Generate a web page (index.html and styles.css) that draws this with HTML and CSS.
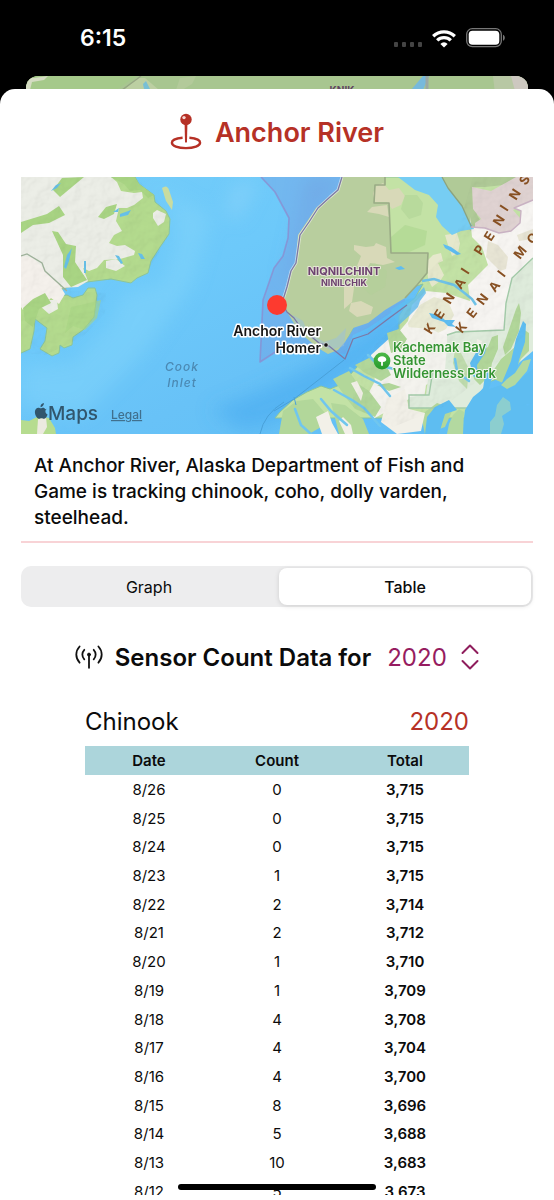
FILE: index.html
```html
<!DOCTYPE html>
<html lang="en">
<head>
  <meta charset="UTF-8" />
  <meta name="viewport" content="width=device-width, initial-scale=1" />
  <title>Anchor River</title>
  <link rel="stylesheet" href="styles.css">
</head>
<body>

  <div class="status-bar">
    <span class="clock">6:15</span>
    <div class="status-icons">
      <svg class="signal" width="28" height="6" viewBox="0 0 28 6" fill="#444">
        <rect x="0" y="1" width="4" height="5" rx="1" />
        <rect x="8" y="1" width="4" height="5" rx="1" />
        <rect x="16" y="1" width="4" height="5" rx="1" />
        <rect x="24" y="1" width="4" height="5" rx="1" />
      </svg>
      <svg width="24" height="19" viewBox="0 0 24 19" fill="none" stroke="#fff" stroke-width="3.3">
        <path d="M1.2 7.2a15.4 15.4 0 0 1 21.6 0" />
        <path d="M5.2 11.4a9.7 9.7 0 0 1 13.6 0" />
        <path d="M12 18.6l-3.6-3.7a5 5 0 0 1 7.2 0z" fill="#fff" stroke="none" />
      </svg>
      <svg width="40" height="20" viewBox="0 0 40 20">
        <rect x="0.7" y="0.7" width="34.6" height="18" rx="5.6" fill="none" stroke="#777" stroke-width="1.3" />
        <rect x="2.7" y="2.7" width="30.6" height="14" rx="3.8" fill="#fff" />
        <path d="M37 6.8c2.4 1 2.4 5 0 6z" fill="#777" />
      </svg>
    </div>
  </div>

  <div class="back-sheet">
    <svg width="100%" height="26" viewBox="0 0 502 26" preserveAspectRatio="none">
      <rect width="502" height="26" fill="#a8c690" />
      <path d="M0 0h110l-20 14H0z" fill="#a5c98a" />
      <path d="M0 6q2-5 8-4l14-2-4 4-12 2-2 8H0z" fill="#d5dcc3" />
      <path d="M98 14l13-12 8 0 14 12z" fill="#bccfa2" />
      <path d="M96 14l15-11 4-3" fill="none" stroke="#97a784" stroke-width="1.5" />
      <path d="M117 8l3-3 4 8h-6z" fill="#79bfd5" />
      <path d="M150 14l4-12 16-2-4 8-10 6z" fill="#b3ca9a" />
      <path d="M385 14l12-14h6l-6 14z" fill="#77b9dc" />
      <path d="M401 0v14" stroke="#9ba8a4" stroke-width="3" />
      <path d="M467 0h35v26h-32z" fill="#b8c8a4" />
      <path d="M485 0h17v26h-10z" fill="#cdc8c0" />
      <text x="316" y="18" class="back-label" text-anchor="middle">KNIK</text>
    </svg>
  </div>

  <main class="sheet">
    <header class="title">
      <svg width="32" height="38" viewBox="0 0 32 38">
        <path d="M12.6 24.7C6.3 25.1 1.9 27.2 1.9 29.8c0 3 6 5.3 14 5.3s14.200-2.300 14.200-5.300c0-2.600-4.400-4.700-10.700-5.100" fill="none" stroke="#b63126" stroke-width="2.400" />
        <path d="M14.600 11h2.800l-.4 17.500c-.1 1.600-1.900 1.600-2 0z" fill="#b63126" />
        <circle cx="16" cy="6.500" r="5.700" fill="#b63126" />
        <circle cx="14" cy="4.600" r="1.700" fill="#f6d6d2" />
      </svg>
      <h1>Anchor River</h1>
    </header>

    <svg class="map" viewBox="0 0 512 257" role="img" aria-label="Map of Anchor River">
      <defs>
        <linearGradient id="sea" x1="0" y1="0" x2="1" y2="1">
          <stop offset="0" stop-color="#74cdf9" />
          <stop offset="0.35" stop-color="#6dc9fa" />
          <stop offset="0.6" stop-color="#68c2f7" />
          <stop offset="1" stop-color="#5fbef5" />
        </linearGradient>
        <linearGradient id="park" x1="0" y1="0" x2="0" y2="1">
          <stop offset="0" stop-color="#4cb848" />
          <stop offset="1" stop-color="#259a2b" />
        </linearGradient>
        <filter id="soft" x="-20%" y="-20%" width="140%" height="140%">
          <feGaussianBlur stdDeviation="9" />
        </filter>
        <filter id="relief" x="0" y="0" width="100%" height="100%">
          <feTurbulence type="fractalNoise" baseFrequency="0.07" numOctaves="3" seed="4" result="noise" />
          <feDiffuseLighting in="noise" surfaceScale="2.200" lighting-color="#fff" result="light">
            <feDistantLight azimuth="225" elevation="68" />
          </feDiffuseLighting>
          <feComposite in="light" in2="SourceGraphic" operator="in" />
        </filter>
      </defs>

      <rect width="512" height="257" fill="url(#sea)" />

      <!-- shallow and deep water -->
      <g filter="url(#soft)">
        <path d="M117 0l35 25 4 40-14 40-40 12-14 30-36 38-52 4v40l60 10 60-60 50-70 20-70z" fill="#84d6fb" opacity="0.5" />
        <path d="M212 8l26-6-20 40-14-4z" fill="#8ad3fa" opacity="0.600" />
        <path d="M285 0h40l-30 36-20 60-12 10 14-60z" fill="#6caae6" opacity="0.500" />
        <path d="M290 190l50-30 30-24 24-12-24 42-30 24-40 28-50 30-30 5-30-20 50-20z" fill="#4aaaf0" opacity="0.600" />
      </g>
      <path d="M240 0l14 15 14 26-1 20-5 18-9 12-11 32-3 62 26-17 59 9 8-19 15-7 21-14 16-12V0z" fill="#7e8fd8" opacity="0.300" />

      <!-- west side of the inlet -->
      <path class="coast" fill="#b4db8e" d="M0 0h114l4 7 15 11 1 7 11 9 4 8-1 15-9 13-9 14-3 12-11 5-6 5-20-4-32 4-16 6-9 1-3 3 8 3 8-1 6 3 10-3 5-7h7l2 7-3 22-11 13-10 7-1 8-8 3-4-3-1 8-7 3-12-7 5-8 2-13-12-9-1 12-4 18-11 5-5-5z" />
      <path d="M141 11q5-4 7 2l4 12-1 8-6-9z" fill="#c9dca0" />
      <path d="M0 243l8 1 10-5 10 2 6 10 1 6H0z" fill="#b6dc8f" />
      <path d="M17 242l8-2 1 10-4 7h-6z" fill="#eceadf" />
      <g fill="#eceee7">
        <path d="M14 0h76l6 5 4 9 13 2 8-1 1 6-9 7-7 3-8 0-3 13 6 10-8 4-5 8 8 3 8-1 10 6-1 4-14 4-16 1-7 8-8 3-6-3 5 13-10 6-17 1-2-11-7-7-3 16-9-7 1-13-12-12-7-11-7 1 0-4-14 0L0 52V0z" />
        <path d="M0 59l20-12 10 3-1 15 5 10-6 7 9 10 10-6 3 14-7 8-10-2-8-12-12-8-13-2z" />
        <path d="M0 79l12 2 14 14 12 12 6 10-6 10-8-6-8 8-12-4-8 8-4-6z" fill="#f5f1ec" />
        <path d="M132 36l4-3 9 4-2 8-6 4-5-8z" />
        <path d="M85 84l10-2 9 7-9 5-10-3z" />
        <path d="M20 123h16l1 9-9 5-9-8z" />
      </g>
      <path d="M0 79l6-2 15 9 3 8 22 20" fill="none" stroke="#9fb39b" stroke-width="1.300" />
      <g fill="#a9d584">
        <path d="M32 13l9-12 22-1-12 10-12 10z" />
        <path d="M0 45l26-8 12-8 6 9-16 8-16 2L0 56z" />
        <path d="M31 54l6 1 8 12 10 2-1 16 12 18-16 7-8-10 0-22z" />
        <path d="M77 40l8-10 11-3-3 10-10 5z" />
        <path d="M90 0h24l4 7 15 11-6 3-8-8-10 1-6-7z" />
        <path d="M2 131l10-9 12-6 6 10-12 6-6 18-8-6z" />
        <path d="M50 130l14-3 16-4-4 18-12 12-12-4-8 7z" opacity="0.600" />
      </g>
      <g fill="#66c0e8">
        <path d="M85 37l11-4-3 5-8 2z" transform="translate(14 0)" />
        <path d="M92 35l6-4-1 4z" />
        <path d="M94 78l4 1 4 7-2 1z" />
        <path d="M117 76l4 1 3 5-4 0z" />
        <path d="M43 90l3-12 5-7-3 13-3 8z" />
        <path d="M63 84h2v12h-2z" />
        <path d="M30 14l5-6 5-2-4 5z" />
      </g>

      <!-- Kenai peninsula -->
      <path class="coast" fill="#c3e2a5" d="M321 0l-4 13-8 7-12 11-9 14-9 13-2 14-2 14-5 8-4 16-5 16 5 9 9 2 7 14 18 15 10 6 10-4 7-8 8-14 15-5 17-13 12-10 13-8 10-3-8 14-9 7-7 11 0 18-10 8-4 10-13 9-14 5-9 10-10 0 3 8-12 5-9-3-14 6-14 8-13 12-5 6h196l5-24 8-10 15-6 8-12 12-30 16-16 0-32 8 2 8-14V0z" />
      <path d="M321 0h43v8h-10l-1 18h15l2 50h37l-1 20-10 12-12 13-20 12-17 13-15 5-8 14-7 8-10 4-10-6-18-15-13-21-5-9 5-16 4-16 5-8 2-28 18-27 21-18z" fill="#b8ce9e" />
      <path d="M272 138l10 6 4 10 17 11 12-4 10-10-2 18-14 4-22-14-14-14z" fill="#99bfdb" opacity="0.500" />

      <g fill="#d8d9b8">
        <path d="M354 10l8-4 6 7 10-2 6 8-4 9-9 4-5-7-12 0-2-8z" />
        <path d="M351 30l15-2 2 12-10-3-12-2z" />
        <path d="M333 68l12 2 8-1 2-3 10 4 1 11 8 4-12 3-13-2-3 7-10-4 4-10-7-6z" />
        <path d="M323 110l6-5 4 6-2 14-8 7z" />
        <path d="M330 126l10-2 12 6-2 7-14 3-8-6z" />
      </g>
      <g fill="#aed194">
        <path d="M384 18l12 0 6 8-2 12-12 4-8-10z" opacity="0.500" />
        <path d="M370 60l14-12 22 6-2 14-18 8h-16z" fill="#a8d48a" opacity="0.500" />
        <path d="M421 0h75l-14 8-18 2-12 0 2 14 2 14 6 10-12 6-10-8-14-28z" fill="#b0ca97" />
        <path d="M340 92l14-6 12 8-2 16-14 8-12-10z" opacity="0.350" />
      </g>

      <!-- mountains and ice on the right side -->
      <path d="M451 10l19 4 18-10 7-4h17v23l-12 6-8 4 7 8 1 6-8 6-12 4-12-3-14-2 0-6 6-4-8-10z" fill="#e0d3d2" />
      <path d="M449 50l14 1 14 5 13-2 9-8 1-12-7-3 19-8v58l-21 20-6 25-2 27-48 2-9 3 0 30-13 14-8-2-4-16-20-6-4-22 10-12 4-16 14-14 20 2 24 8-2-16 20-20-6-18-10-10-2-20z" fill="#f7f5f2" />
      <path d="M467 64l10 4 10 12-2 12-6 2-14-14z" fill="#e8e5d5" />
      <path d="M496 58l16-6v10l-14 2z" fill="#e8e5d5" />
      <path d="M399 128l14-8 14 4 6 14-8 14-20 10-16 0-2-16z" fill="#e9ead4" />
      <path d="M372 158l14-8 24 2 16 8-1 34-20 14-2 14-15 0-36 20-12-12 14-26-4-26z" fill="#f4f3ee" />
      <path d="M406 84l6-6 8-2 2 8-5 2 6 12-4 6-8 6-4-8z" fill="#e6e8cc" />
      <path d="M424 58l12-2 3 10-2 10-6 3-4-11z" fill="#e6e8cc" />

      <!-- wilderness park area -->
      <path d="M512 81l-21 20-6 25-2 27-48 2-9 3 0 8-2 27-16 1-3 24-17 2v11h58l20-25 22-12 24-20v-93z" fill="#dfecdc" />
      <g fill="#b2d79a">
        <path d="M451 188l8-14 8-4 4-10 6-2 0 14-6 14-2 12-10 10-6-6z" />
        <path d="M480 182l14-12 8-18 6 4v18l-8 8-8 16-10 8-14-6z" />
        <path d="M495 132l3-6 2 10-2 18-8 18-6 6-2-8z" />
        <path d="M434 172l6 4 8 16-2 20-8-8-6-18z" opacity="0.700" />
        <path d="M312 202l16-8 8 12 12 8 12 16-6 10-20-8-8-10z" />
        <path d="M334 188l16-8 14 6 6 12-10 6-16-8z" />
        <path d="M262 234l14-10 16-2 12 14-4 14-12 7h-30z" />
        <path d="M310 226l14 2 18 14 6 15h-30l-4-16z" />
        <path d="M366 156l12-4 8 10-6 10-10 4z" />
        <path d="M400 238l16-12 16 6-8 18-20 7z" />
        <path d="M356 208l12-2 12 4-12 4z" />
      </g>
      <g fill="#f2f0e8">
        <path d="M295 240l12-6 4 12 6 11h-16z" />
        <path d="M330 206l6-2 6 12-2 8z" />
        <path d="M318 244l4-4 8 8 2 9h-8z" />
        <path d="M366 222l18-10 4 20 16 4-4 18-24 3-16-12z" />
        <path d="M456 162l5 2-2 8-4-2z" />
      </g>
      <path d="M512 81l-21 20-6 25-2 27-48 2-9 3M412 193l-4 25h-20v13h58" fill="none" stroke="#a3cba9" stroke-width="1.400" />

      <!-- lakes, rivers and fjords -->
      <g fill="#5ebdf1">
        <path d="M377 0h44l6 11 14 18 8 16 4 7-13 2-9 4-10-9-6-9 2-12-9-10-14-5z" fill="#76cdf3" />
        <path d="M369 133l16-10 8-2 10-11 2 6-6 8-2 6-9 9-10 9z" opacity="0.800" />
        <path d="M441 257l3-24 8-13 10-8 2-14 5-8 3 8-4 14 12-4 10-24 5-22 7-18 3 3-1 18-6 18-5 26-8 10 8 8 8-2 6 4 8-10v38z" />
        <path d="M449 186l8-14 9-6-2 10-8 12 1 14-5-3z" />
        <path d="M512 192l-10 8-10 10-6 4-4 8 10 8 20-4z" />
        <path d="M414 230l-8 10-2 17h14l6-20 12-4-8-10z" />
        <path d="M422 67l8 3 10 7-4 1-12-7z" />
        <path d="M374 91l6-2 4 3-6 1z" />
        <path d="M408 136l10 2 6 5 10 0-3 4 4 3-8-1-4-4-12-4z" />
      </g>
      <path d="M401 104l12-2 6 2 14 4 8 6 10 8 4 6" fill="none" stroke="#6fc3e8" stroke-width="2.500" />
      <g fill="none" stroke="#70c6ee" stroke-width="2.500" stroke-linecap="round">
        <path d="M313 213l18 10 12 8 16 18" />
        <path d="M329 191l14 8 16 8 10 12" />
        <path d="M347 178l10 10 16 4" />
        <path d="M274 232l6 16 10 9" />
        <path d="M300 222l10 12 16 14" />
        <path d="M434 182l2 12M448 204l-8-6" />
      </g>
      <g fill="#b3d9a0">
        <path d="M432 238l6-6 5 3-1 22h-16l2-10z" />
        <path d="M476 228l6-8 7 5 1 8-9 6 2 8-3 10h-11l0-12 5-6z" fill="#9fd5c0" opacity="0.700" />
        <path d="M486 202l8-6 8-12 8-2-4 12-12 14-8 4-6-4z" />
      </g>

      <!-- relief shading on the land -->
      <g filter="url(#relief)" class="relief">
        <path d="M0 0h114l19 18 16 24-3 20-18 30-20 10-50 2-9 10 36 2-1 20-22 24-38 18-24-2z" />
        <path d="M452 0h60v150l-20 20-30 30-40 30-50 20-40-20 0-40 50-50 20-40 30-30z" />
      </g>

      <!-- borders -->
      <g fill="none" stroke-linejoin="round">
        <path d="M364 0v8h-10l-1 18h15l2 50h37l-1 20-10 12-12 13" stroke="#9aab86" stroke-width="1.600" />
        <path d="M421 0l6 11 14 18 10 22" stroke="#8ca37e" stroke-width="1.300" />
        <path d="M450 50l14 1 14 5 12-2 9-8 1-12-7-3 19-8" stroke="#c9b2c3" stroke-width="1.400" />
        <path d="M240 0l14 15 14 26-1 20-5 18-9 12-11 32-3 62 26-17" stroke="#8f88cc" stroke-width="1.600" opacity="0.700" />
        <path d="M321 0l-4 13-8 7-12 11-9 14-9 13-2 14-2 14-5 8-4 16-5 16" stroke="#fff" stroke-width="3" opacity="0.500" />
        <path d="M321 0l-4 13-8 7-12 11-9 14-9 13-2 14-2 14-5 8-4 16-5 16 5 9 7 6 7 10 18 15 10 3 16 13 8-20 15-5 20-15 19-14" stroke="#7c78a6" stroke-width="1.300" />
        <path d="M323 183l-50 39-20 12M273 220l2 8M239 257q4-20 24-32" stroke="#49a0d8" stroke-width="1" />
      </g>

      <!-- labels -->
      <g class="map-range">
        <text rotate="-57" x="410 420 429 440 447" y="158 143 128 113 98">KENAI</text>
        <text rotate="-57" x="460 470 479 486 495 505" y="79 65 50 35 24 9">PENINS</text>
        <text rotate="-52" x="441 452 462 474 483" y="157 142 129 116 101">KENAI</text>
        <text rotate="-52" x="499 512" y="83 68">MO</text>
      </g>
      <g class="map-region" text-anchor="middle">
        <text x="323" y="98" font-size="11">NIQNILCHINT</text>
        <text x="323" y="109" font-size="9">NINILCHIK</text>
      </g>
      <g class="map-water" text-anchor="middle">
        <text x="161" y="194">Cook</text>
        <text x="161" y="210">Inlet</text>
      </g>
      <g class="map-town">
        <text x="300" y="159" text-anchor="end">Anchor River</text>
        <text x="300" y="176" text-anchor="end">Homer</text>
      </g>
      <circle cx="305" cy="168" r="2.200" fill="#111" stroke="#fff" stroke-width="0.600" />
      <circle cx="256" cy="128" r="10" fill="#fd3a2f" />
      <circle cx="361" cy="184" r="8.400" fill="url(#park)" />
      <path d="M361 179.300c2.400 0 4.300 1.500 4.300 3.300 0 1.500-1.400 2.300-3.400 2.300v3.800h-1.800v-3.800c-2 0-3.400-.8-3.400-2.300 0-1.800 1.900-3.300 4.300-3.300z" fill="#fff" />
      <g class="map-park">
        <text x="372" y="175">Kachemak Bay</text>
        <text x="372" y="188">State</text>
        <text x="372" y="201">Wilderness Park</text>
      </g>
      <path d="M24.500 232.200c-.8-1.300-2.100-1.900-3.500-1.300-1.100.5-1.500.5-2.500 0-2-.8-4.400.9-4.600 3.700-.2 3.300 2 7.200 4 7.200 1 0 1.400-.6 2.500-.6s1.500.6 2.500.6c1.600 0 3.100-2.500 3.700-4.400-2.700-1.200-2.900-4.300-.6-5.700zM19.500 230.200c-.2-2.100 1.500-3.900 3.400-4.100.2 2.100-1.500 4-3.400 4.100z" fill="#31566d" />
      <text x="27" y="243" class="map-brand">Maps</text>
      <a href="#legal"><text x="90" y="242" class="map-legal">Legal</text></a>
    </svg>

    <p class="about">At Anchor River, Alaska Department of Fish and Game is tracking chinook, coho, dolly varden, steelhead.</p>

    <div class="segmented">
      <button type="button" class="segment">Graph</button>
      <button type="button" class="segment active">Table</button>
    </div>

    <div class="sensor">
      <svg width="28" height="24" viewBox="0 0 28 24" fill="none" stroke="#111" stroke-width="1.800" stroke-linecap="round">
        <path d="M4.600 1.500C.2 6.200.2 13 4.600 17.700M23.400 1.500c4.400 4.700 4.400 11.500 0 16.200" />
        <path d="M9.300 4.800c-2.600 2.700-2.600 6.900 0 9.600M18.700 4.800c2.600 2.700 2.600 6.900 0 9.600" />
        <path d="M14 10v12.800" />
        <circle cx="14" cy="9.600" r="1.500" fill="#111" stroke-width="1" />
      </svg>
      <label for="year">Sensor Count Data for</label>
      <span class="year-picker">
        <select id="year">
          <option>2020</option>
        </select>
        <svg width="18" height="26" viewBox="0 0 18 26" fill="none" stroke="#8f1d5c" stroke-width="2" stroke-linecap="round" stroke-linejoin="round">
          <path d="M1.500 9L9 1.500 16.500 9M1.500 17L9 24.500 16.500 17" />
        </svg>
      </span>
    </div>

    <section class="counts">
      <div class="counts-head">
        <h2>Chinook</h2>
        <span class="counts-year">2020</span>
      </div>
      <table>
        <thead>
          <tr><th>Date</th><th>Count</th><th>Total</th></tr>
        </thead>
        <tbody>
          <tr><td>8/26</td><td>0</td><td>3,715</td></tr>
          <tr><td>8/25</td><td>0</td><td>3,715</td></tr>
          <tr><td>8/24</td><td>0</td><td>3,715</td></tr>
          <tr><td>8/23</td><td>1</td><td>3,715</td></tr>
          <tr><td>8/22</td><td>2</td><td>3,714</td></tr>
          <tr><td>8/21</td><td>2</td><td>3,712</td></tr>
          <tr><td>8/20</td><td>1</td><td>3,710</td></tr>
          <tr><td>8/19</td><td>1</td><td>3,709</td></tr>
          <tr><td>8/18</td><td>4</td><td>3,708</td></tr>
          <tr><td>8/17</td><td>4</td><td>3,704</td></tr>
          <tr><td>8/16</td><td>4</td><td>3,700</td></tr>
          <tr><td>8/15</td><td>8</td><td>3,696</td></tr>
          <tr><td>8/14</td><td>5</td><td>3,688</td></tr>
          <tr><td>8/13</td><td>10</td><td>3,683</td></tr>
          <tr><td>8/12</td><td>5</td><td>3,673</td></tr>
        </tbody>
      </table>
    </section>
  </main>

  <div class="home-indicator"></div>

</body>
</html>
```
FILE: styles.css
```css
* {
  box-sizing: border-box;
}

body {
  font-family: Inter, "Liberation Sans", sans-serif;
  margin: 0;
  height: 100vh;
  overflow: hidden;
  background: #000;
  color: #0b0b0b;
  display: flex;
  flex-direction: column;
}

h1, h2, p {
  margin: 0;
}

.status-bar {
  height: 76px;
  flex: none;
  display: flex;
  justify-content: space-between;
  padding: 0 48px 0 80px;
  line-height: 76px;
}

.clock {
  color: #fff;
  font-size: 23px;
  font-weight: 600;
}

.status-icons {
  display: flex;
  align-items: center;
  gap: 10px;
}

.signal {
  margin-top: 12px;
}

.back-sheet {
  height: 26px;
  flex: none;
  margin: 0 26px -13px;
  border-radius: 12px 12px 0 0;
  overflow: hidden;
}

.back-label {
  font-size: 10px;
  font-weight: 700;
  fill: #5f4460;
}

.sheet {
  position: relative;
  flex: 1;
  min-height: 0;
  overflow: hidden;
  background: #fff;
  border-radius: 15px 15px 0 0;
  border-bottom: 5px solid #fff;
  padding: 0 21px;
}

.title {
  display: flex;
  justify-content: center;
  align-items: center;
  gap: 13px;
  height: 88px;
  padding-bottom: 2px;
  color: #b63126;
}

.title h1 {
  font-size: 27px;
  font-weight: 600;
}

/* map */

.map {
  display: block;
  width: 100%;
  height: auto;
}

.coast {
  stroke: #8cc49a;
  stroke-width: 1;
}

.relief {
  mix-blend-mode: multiply;
  opacity: 0.3;
}

.map text {
  paint-order: stroke;
  stroke-linejoin: round;
}

.map-range {
  fill: #875022;
  font-size: 13px;
  font-weight: 700;
}

.map-region {
  fill: #6d4270;
  font-weight: 700;
  stroke: #e6e7d6;
  stroke-width: 2px;
}

.map-water {
  fill: #4b89b3;
  font-size: 12px;
  font-style: italic;
  font-weight: 500;
  letter-spacing: 1px;
}

.map-town {
  fill: #161616;
  font-size: 14px;
  font-weight: 600;
  stroke: #fff;
  stroke-width: 3px;
}

.map-park {
  fill: #349432;
  font-size: 13px;
  font-weight: 600;
  stroke: #f4f7ef;
  stroke-width: 2px;
}

.map-brand {
  fill: #31566d;
  font-size: 19px;
  font-weight: 500;
}

.map-legal {
  fill: #40708e;
  font-size: 12px;
  font-weight: 500;
  text-decoration: underline;
}

/* description */

.about {
  padding: 19px 13px 10px;
  border-bottom: 2px solid #f8d3d6;
  font-size: 19px;
  font-weight: 500;
  line-height: 26px;
}

.segmented {
  display: flex;
  gap: 4px;
  height: 41px;
  margin-top: 23px;
  padding: 2px;
  border-radius: 10px;
  background: #ededee;
}

.segment {
  flex: 1;
  border: 0;
  border-radius: 8px;
  background: none;
  color: inherit;
  font-family: inherit;
  font-size: 16px;
  cursor: pointer;
}

.segment.active {
  background: #fff;
  font-weight: 500;
  box-shadow: 0 1px 5px rgba(0, 0, 0, 0.13);
}

.sensor {
  display: flex;
  justify-content: center;
  align-items: center;
  gap: 12px;
  height: 34px;
  margin-top: 33px;
  font-size: 24px;
}

.sensor label {
  font-weight: 600;
}

.year-picker {
  display: flex;
  align-items: center;
  gap: 14px;
  padding-left: 4px;
}

.year-picker select {
  appearance: none;
  border: 0;
  padding: 0;
  background: none;
  color: #961c60;
  font-family: inherit;
  font-size: 24px;
}

/* counts table */

.counts {
  width: 75%;
  margin: 22px auto 0;
}

.counts-head {
  display: flex;
  justify-content: space-between;
  align-items: center;
  height: 50px;
  font-size: 24px;
}

.counts h2 {
  font-size: 24px;
  font-weight: 400;
}

.counts-year {
  color: #b63126;
}

.counts table {
  width: 100%;
  height: 460px;
  table-layout: fixed;
  border-collapse: collapse;
  font-size: 15px;
  text-align: center;
}

.counts th,
.counts td {
  padding: 0;
}

.counts th {
  height: 29px;
  background: #acd5db;
  font-weight: 600;
}

.counts td:last-child {
  font-weight: 600;
}

.home-indicator {
  position: absolute;
  bottom: 10px;
  left: 50%;
  width: 198px;
  height: 6px;
  margin-left: -99px;
  border-radius: 3px;
  background: #000;
}
```
